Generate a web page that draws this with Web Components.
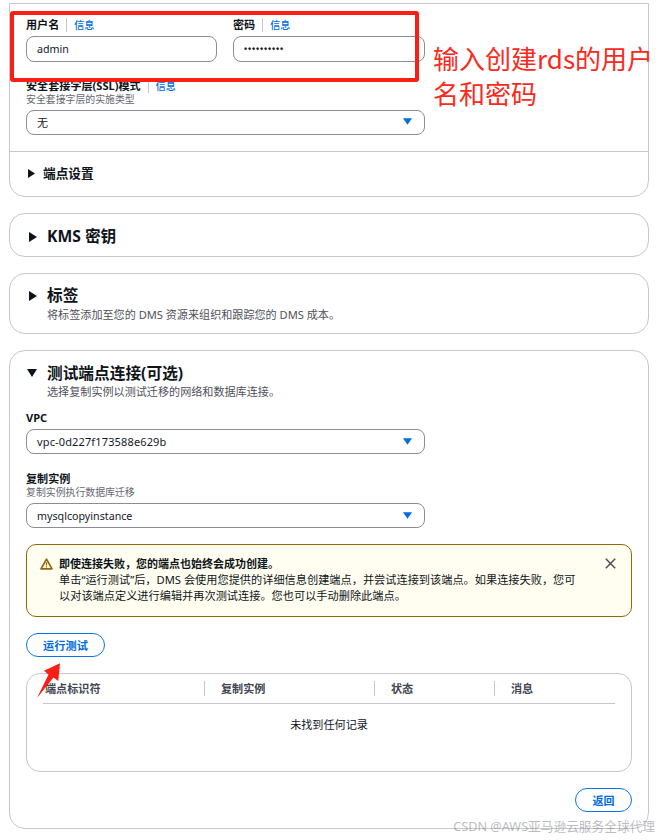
<!DOCTYPE html>
<html lang="zh">
<head>
<meta charset="utf-8">
<title>DMS</title>
<style>
  html, body { margin: 0; background: #fff; }
  body {
    width: 661px; height: 840px; overflow: hidden; position: relative;
    font-family: "Noto Sans", "Noto Sans CJK SC", sans-serif;
    font-size: 11px; color: #16191f;
  }
  .page { padding: 3px 12px 0 9px; display: flex; flex-direction: column; gap: 16px; }
</style>
</head>
<body>
<div class="page">
  <dms-card square style="height:192px">
    <dms-section style="height:147px; padding:14px 16px 0">
      <div style="display:grid; grid-template-columns:191px 192px; column-gap:16px">
        <dms-field label="用户名" info><dms-box value="admin" style="font-size:10.7px"></dms-box></dms-field>
        <dms-field label="密码" info><dms-box value="••••••••••" dots></dms-box></dms-field>
      </div>
      <dms-field label="安全套接字层(SSL)模式" info hint="安全套接字层的实施类型" style="margin-top:17px; width:399px">
        <dms-box value="无" select style="padding-bottom:2px"></dms-box>
      </dms-field>
    </dms-section>
    <dms-expander small title="端点设置" style="border-top:1px solid #c6c6cd; height:45px; --t:11px; --c:17px"></dms-expander>
  </dms-card>

  <dms-card style="height:42px"><dms-expander title="KMS 密钥" style="height:42px; --t:12px; --c:18px"></dms-expander></dms-card>

  <dms-card style="height:59px">
    <dms-expander title="标签" desc="将标签添加至您的 DMS 资源来组织和跟踪您的 DMS 成本。" style="height:59px; --t:11px; --c:17px; --g:3px"></dms-expander>
  </dms-card>

  <dms-card style="height:477px">
    <dms-expander open title="测试端点连接(可选)" desc="选择复制实例以测试迁移的网络和数据库连接。" style="height:50px; --t:12px; --c:18px; --g:2px"></dms-expander>
    <dms-section style="padding:10px 16px 0">
      <dms-field label="VPC" style="width:399px"><dms-box value="vpc-0d227f173588e629b" select style="letter-spacing:.14px"></dms-box></dms-field>
      <dms-field label="复制实例" hint="复制实例执行数据库迁移" style="width:399px; margin-top:18px">
        <dms-box value="mysqlcopyinstance" select style="font-size:10.7px"></dms-box>
      </dms-field>
      <dms-alert heading="即使连接失败，您的端点也始终会成功创建。" style="margin-top:16px">单击“运行测试”后，DMS 会使用您提供的详细信息创建端点，并尝试连接到该端点。如果连接失败，您可<br>以对该端点定义进行编辑并再次测试连接。您也可以手动删除此端点。</dms-alert>
      <dms-pill style="margin-top:16px; width:79px; font-size:11.2px">运行测试</dms-pill>
      <dms-records empty="未找到任何记录" style="margin-top:16px"></dms-records>
      <div style="display:flex; justify-content:flex-end; margin-top:16px"><dms-pill style="width:57px">返回</dms-pill></div>
    </dms-section>
  </dms-card>
</div>
<dms-notes></dms-notes>

<script>
class DmsCard extends HTMLElement {
  constructor() {
    super();
    this.attachShadow({ mode: 'open' });
    this.shadowRoot.innerHTML = `
      <style>
      :host {
        display: block;
        box-sizing: content-box;
        border: 1px solid #c6c6cd;
        border-radius: 16px;
        background: #fff;
      }
      :host([square]) { border-radius: 0 0 16px 16px; }
      </style>
      <slot></slot>
    `;
  }
}

class DmsSection extends HTMLElement {
  constructor() {
    super();
    this.attachShadow({ mode: 'open' });
    this.shadowRoot.innerHTML = `
      <style>:host { display: block; box-sizing: border-box; }</style>
      <slot></slot>
    `;
  }
}

class DmsField extends HTMLElement {
  constructor() {
    super();
    this.attachShadow({ mode: 'open' });
    const info = this.hasAttribute('info') ? '<span class="info">信息</span>' : '';
    const hint = this.getAttribute('hint');
    this.shadowRoot.innerHTML = `
      <style>
      :host { display: block; }
      .label { display: flex; align-items: center; height: 14px; font-weight: 700; font-size: 11.1px; line-height: 14px; color: #0f141a; }
      .info { margin-left: 7px; padding-left: 7px; border-left: 1px solid #c6c6cd; color: #006ce0; font-weight: 500; font-size: 10px; line-height: 14px; }
      .hint { color: #656871; font-size: 9.9px; line-height: 12px; }
      .ctl { margin-top: ${hint ? 5 : 4}px; }
      </style>
      <div class="label">${this.getAttribute('label')}${info}</div>
      ${hint ? `<div class="hint">${hint}</div>` : ''}
      <div class="ctl"><slot></slot></div>
    `;
  }
}

class DmsBox extends HTMLElement {
  constructor() {
    super();
    this.attachShadow({ mode: 'open' });
    const arrow = this.hasAttribute('select')
      ? '<svg width="9" height="7" viewBox="0 0 9 7"><path d="M0 .2h9L4.5 6.8z" fill="#006ce0"/></svg>' : '';
    this.shadowRoot.innerHTML = `
      <style>
      :host {
        display: flex;
        box-sizing: border-box;
        align-items: center;
        justify-content: space-between;
        height: 26px;
        padding: 0 12px 0 10px;
        border: 1px solid #8c8c94;
        border-radius: 8px;
        background: #fff;
        font-size: 11px;
        color: #16191f;
      }
      :host([select]) { height: 25px; }
      :host([dots]) span { font-size: 9px; letter-spacing: .85px; font-weight: 700; font-family: "Liberation Sans", sans-serif; }
      </style>
      <span>${this.getAttribute('value')}</span>${arrow}
    `;
  }
}

class DmsExpander extends HTMLElement {
  constructor() {
    super();
    this.attachShadow({ mode: 'open' });
    const open = this.hasAttribute('open');
    const small = this.hasAttribute('small');
    const caret = open
      ? '<svg width="10" height="8" viewBox="0 0 10 8"><path d="M0 0h10L5 8z" fill="#0f141a"/></svg>'
      : small
        ? '<svg width="7" height="9" viewBox="0 0 7 9" style="margin-left:1px"><path d="M0 0v9L7 4.5z" fill="#0f141a"/></svg>'
        : '<svg width="8" height="10" viewBox="0 0 8 10" style="margin-left:2px"><path d="M0 0v10L8 5z" fill="#0f141a"/></svg>';
    const desc = this.getAttribute('desc');
    this.shadowRoot.innerHTML = `
      <style>
      :host { display: flex; box-sizing: border-box; padding: 0 17px; }
      .caret { width: 20px; flex: none; padding-top: var(--c, 18px); line-height: 0; }
      .body { padding-top: var(--t, 12px); }
      .title { font-weight: 700; font-size: 15.7px; line-height: 20px; color: #0f141a; }
      .desc { font-size: 11.1px; line-height: 14px; color: #4f525a; margin-top: var(--g, 2px); }
      :host([small]) .caret { width: 16px; }
      :host([small]) .title { font-size: 12.7px; }
      </style>
      <div class="caret">${caret}</div>
      <div class="body">
        <div class="title">${this.getAttribute('title')}</div>
        ${desc ? `<div class="desc">${desc}</div>` : ''}
      </div>
    `;
  }
}

class DmsAlert extends HTMLElement {
  constructor() {
    super();
    this.attachShadow({ mode: 'open' });
    this.shadowRoot.innerHTML = `
      <style>
      :host {
        display: flex;
        box-sizing: border-box;
        height: 73px;
        padding: 11px 15px 0 13px;
        gap: 6px;
        border: 1px solid #906806;
        border-radius: 10px;
        background: #fffef0;
        font-size: 11.2px;
        line-height: 16px;
        color: #0f141a;
      }
      .icon { flex: none; padding-top: 2px; }
      .text { flex: 1; white-space: nowrap; }
      b { display: block; font-weight: 700; font-size: 11px; }
      .x { flex: none; margin-top: 2px; }
      </style>
      <div class="icon"><svg width="13" height="12" viewBox="0 0 13 12"><path d="M6.5 1.2 12 10.8H1z" fill="none" stroke="#906806" stroke-width="1.7" stroke-linejoin="round"/><path d="M6.5 4.2v3.4M6.5 8.3v1.1" stroke="#906806" stroke-width="1.3"/></svg></div>
      <div class="text"><b>${this.getAttribute('heading')}</b><slot></slot></div>
      <svg class="x" width="11" height="11" viewBox="0 0 11 11"><path d="M.8 .8l9.4 9.4M10.2 .8L.8 10.2" stroke="#4b4e55" stroke-width="1.5"/></svg>
    `;
  }
}

class DmsPill extends HTMLElement {
  constructor() {
    super();
    this.attachShadow({ mode: 'open' });
    this.shadowRoot.innerHTML = `
      <style>
      :host {
        display: flex;
        box-sizing: border-box;
        align-items: center;
        justify-content: center;
        height: 24px;
        border: 1.2px solid #0a74e4;
        border-radius: 12px;
        background: #fff;
        color: #006ce0;
        font-weight: 700;
        font-size: 11px;
      }
      </style>
      <slot></slot>
    `;
  }
}

class DmsRecords extends HTMLElement {
  constructor() {
    super();
    this.attachShadow({ mode: 'open' });
    const cols = [['端点标识符', 161], ['复制实例', 170], ['状态', 120], ['消息', 121]];
    this.shadowRoot.innerHTML = `
      <style>
      :host {
        display: block;
        box-sizing: border-box;
        height: 99px;
        padding: 0 16px;
        border: 1px solid #c6c6cd;
        border-radius: 14px;
        background: #fff;
      }
      .head { display: flex; box-sizing: border-box; height: 30px; align-items: center; border-bottom: 1px solid #c6c6cd; }
      .col { box-sizing: border-box; font-weight: 700; font-size: 11.1px; color: #424650; height: 15px; line-height: 15px; padding-left: 16px; border-left: 1px solid #c6c6cd; }
      .col:first-child { border-left: 0; padding-left: 2px; }
      .empty { text-align: center; font-size: 11.1px; line-height: 14px; margin-top: 14px; color: #0f141a; }
      </style>
      <div class="head">${cols.map(c => `<div class="col" style="width:${c[1]}px">${c[0]}</div>`).join('')}</div>
      <div class="empty">${this.getAttribute('empty')}</div>
    `;
  }
}

// the red marks and the watermark lie over the page
class DmsNotes extends HTMLElement {
  constructor() {
    super();
    this.attachShadow({ mode: 'open' });
    this.shadowRoot.innerHTML = `
      <style>
      :host { display: block; position: absolute; left: 0; top: 0; width: 661px; height: 840px; pointer-events: none; }
      .box { position: absolute; left: 9.5px; top: 11px; width: 409.5px; height: 71px; box-sizing: border-box; border: 4px solid #fb1e14; border-radius: 3px; }
      .note { position: absolute; left: 433px; top: 40px; width: 228px; font-size: 26px; line-height: 35px; font-weight: 400; color: #fb2a20; font-family: "Noto Sans CJK SC", sans-serif; }
      .arrow { position: absolute; left: 36px; top: 663px; }
      .mark { position: absolute; right: 6px; top: 818px; font-size: 12.7px; line-height: 16px; color: rgba(120,120,130,.5); white-space: nowrap; }
      </style>
      <div class="box"></div>
      <div class="note">输入创建rds的用户名和密码</div>
      <svg class="arrow" width="26" height="38" viewBox="0 0 26 38"><path d="M1 35 12.5 11.5 8 7.7 24 .3 22.3 18 17.5 14.5z" fill="#fb1e14"/></svg>
      <div class="mark">CSDN @AWS亚马逊云服务全球代理</div>
    `;
  }
}

customElements.define('dms-card', DmsCard);
customElements.define('dms-section', DmsSection);
customElements.define('dms-field', DmsField);
customElements.define('dms-box', DmsBox);
customElements.define('dms-expander', DmsExpander);
customElements.define('dms-alert', DmsAlert);
customElements.define('dms-pill', DmsPill);
customElements.define('dms-records', DmsRecords);
customElements.define('dms-notes', DmsNotes);
</script>
</body>
</html>
